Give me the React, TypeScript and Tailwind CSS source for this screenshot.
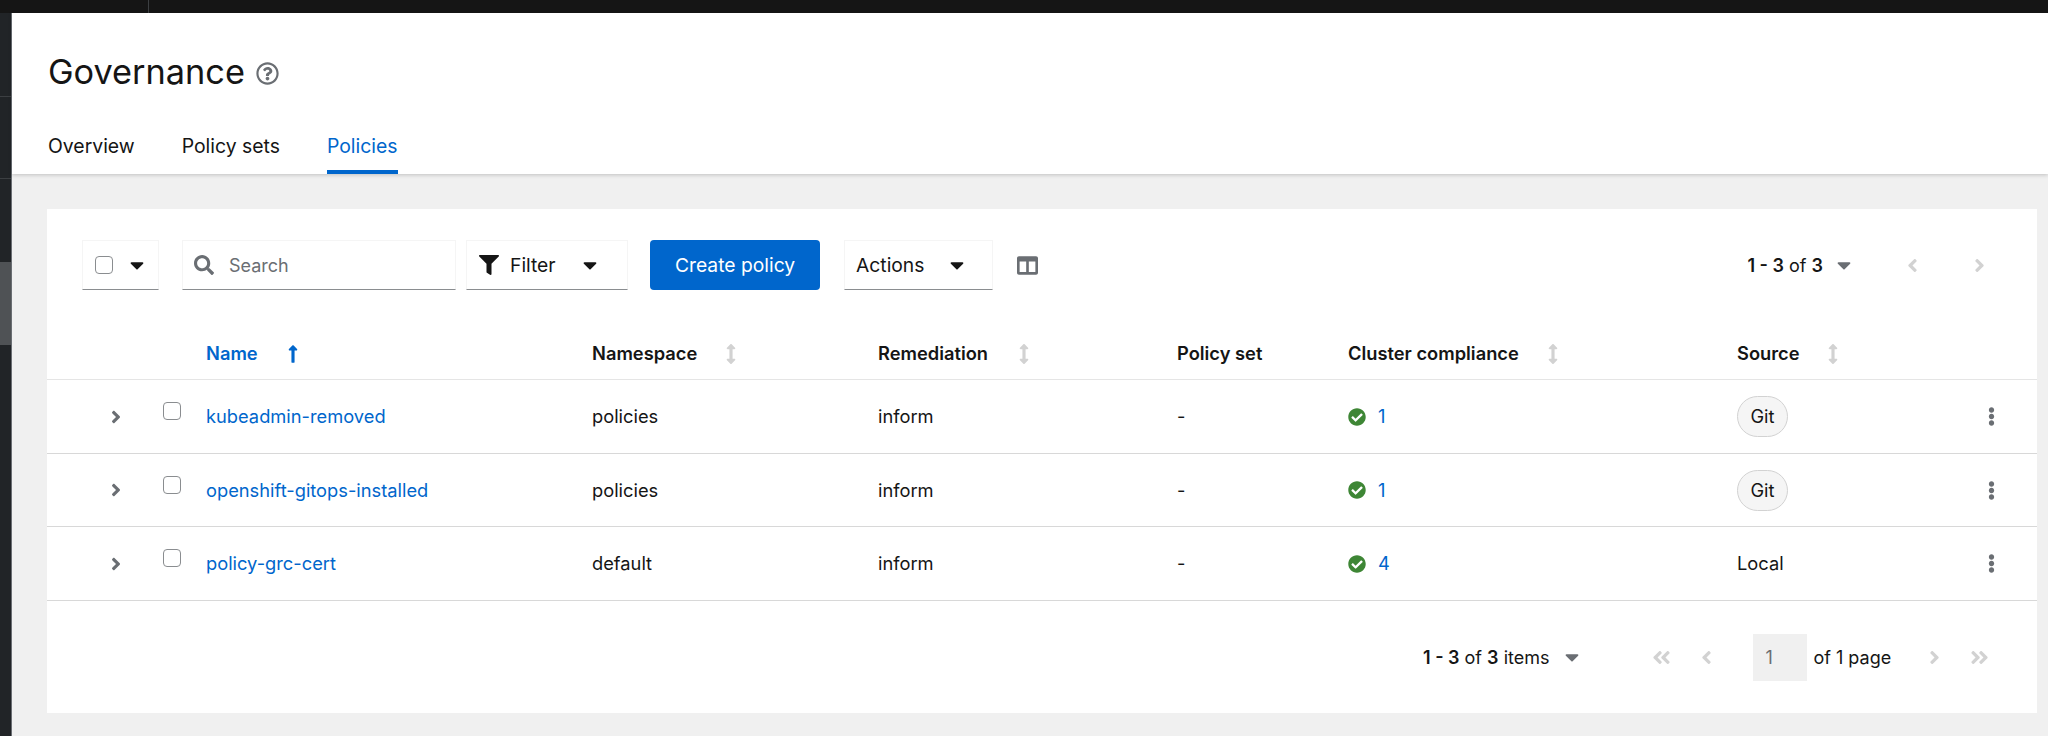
import React from "react";
import {
  FaAngleDoubleLeft,
  FaAngleDoubleRight,
  FaAngleLeft,
  FaAngleRight,
  FaArrowsAltV,
  FaCaretDown,
  FaCheckCircle,
  FaColumns,
  FaEllipsisV,
  FaFilter,
  FaLongArrowAltUp,
  FaRegQuestionCircle,
  FaSearch,
} from "react-icons/fa";

type Policy = {
  name: string;
  namespace: string;
  compliance: number;
  source: string;
};

const policies: Policy[] = [
  { name: "kubeadmin-removed", namespace: "policies", compliance: 1, source: "Git" },
  { name: "openshift-gitops-installed", namespace: "policies", compliance: 1, source: "Git" },
  { name: "policy-grc-cert", namespace: "default", compliance: 4, source: "Local" },
];

const gridCols = "grid grid-cols-[159px_386px_286px_299px_171px_389px_245px_20px] items-center";

function Checkbox() {
  return <span className="block w-[18px] h-[18px] rounded-[4px] border border-[#8a8d90] bg-white" />;
}

function SortHeader({ title }: { title: string }) {
  return (
    <div className="flex items-center text-[#151515] font-semibold">
      {title}
      <FaArrowsAltV className="ml-auto text-[#d2d2d2] text-[20px]" />
    </div>
  );
}

function Dropdown({ className, children }: { className: string; children: React.ReactNode }) {
  return (
    <div className={`flex items-center h-[50px] border border-[#f5f5f5] border-b-[#8a8d90] ${className}`}>
      {children}
    </div>
  );
}

function Toolbar() {
  return (
    <div className="flex items-center h-[50px] pl-[35px] pr-[47px] text-[18px]">
      <Dropdown className="w-[77px] pl-[12px]">
        <Checkbox />
        <FaCaretDown className="ml-[13px] text-[#151515] text-[22px]" />
      </Dropdown>
      <Dropdown className="w-[274px] ml-[23px] pl-[11px]">
        <FaSearch className="text-[#6a6e73] text-[20px]" />
        <span className="ml-[15px] text-[#6a6e73]">Search</span>
      </Dropdown>
      <Dropdown className="w-[162px] ml-[10px] pl-[12px]">
        <FaFilter className="text-[#151515] text-[20px]" />
        <span className="ml-[11px] text-[#151515] text-[19.3px]">Filter</span>
        <FaCaretDown className="ml-[23px] text-[#151515] text-[22px]" />
      </Dropdown>
      <button className="w-[170px] h-[50px] ml-[22px] bg-[#0066cc] text-white text-[19.3px] rounded-[4px]">
        Create policy
      </button>
      <Dropdown className="w-[149px] ml-[24px] pl-[11px]">
        <span className="text-[#151515] text-[19.3px]">Actions</span>
        <FaCaretDown className="ml-[22px] text-[#151515] text-[22px]" />
      </Dropdown>
      <FaColumns className="ml-[24px] text-[#6a6e73] text-[21px]" />
      <div className="ml-auto flex items-center text-[#151515]">
        <span>
          <b className="font-semibold">1 - 3</b> of <b className="font-semibold">3</b>
        </span>
        <FaCaretDown className="ml-[10px] text-[#6a6e73] text-[22px]" />
        <FaAngleLeft className="ml-[47px] text-[#d2d2d2] text-[21px]" />
        <FaAngleRight className="ml-[46px] text-[#d2d2d2] text-[21px]" />
      </div>
    </div>
  );
}

function PolicyTable() {
  return (
    <div className="mt-[38px] text-[18.3px]">
      <div className={`${gridCols} h-[52px] border-b border-[#e5e5e5]`}>
        <div />
        <div className="flex items-center text-[#0066cc] font-semibold">
          Name
          <FaLongArrowAltUp className="ml-[25px] text-[20px]" />
        </div>
        <div className="w-[149px]">
          <SortHeader title="Namespace" />
        </div>
        <div className="w-[156px]">
          <SortHeader title="Remediation" />
        </div>
        <div className="text-[#151515] font-semibold">Policy set</div>
        <div className="w-[215px]">
          <SortHeader title="Cluster compliance" />
        </div>
        <div className="w-[106px]">
          <SortHeader title="Source" />
        </div>
      </div>
      {policies.map((policy) => (
        <div key={policy.name} className={`${gridCols} h-[73.5px] pt-[1px] border-b border-[#d8d8d8]`}>
          <div className="flex items-center pl-[59px]">
            <FaAngleRight className="text-[#6a6e73] text-[20px]" />
            <div className="ml-[37px] mb-[11px]">
              <Checkbox />
            </div>
          </div>
          <div className="text-[#0066cc]">{policy.name}</div>
          <div className="text-[#151515]">{policy.namespace}</div>
          <div className="text-[#151515]">inform</div>
          <div className="text-[#151515]">-</div>
          <div className="flex items-center">
            <FaCheckCircle className="text-[#3e8635] text-[18px]" />
            <span className="ml-[12px] text-[#0066cc]">{policy.compliance}</span>
          </div>
          <div>
            {policy.source === "Git" ? (
              <span className="inline-flex items-center justify-center w-[51px] h-[41px] rounded-full border border-[#d2d2d2] bg-[#f5f5f5] text-[#151515]">
                Git
              </span>
            ) : (
              <span className="text-[#151515]">{policy.source}</span>
            )}
          </div>
          <FaEllipsisV className="text-[#6a6e73] text-[19px]" />
        </div>
      ))}
    </div>
  );
}

function Pagination() {
  return (
    <div className="flex items-center mt-[33px] pl-[1376px] text-[18px] text-[#151515]">
      <span>
        <b className="font-semibold">1 - 3</b> of <b className="font-semibold">3</b> items
      </span>
      <FaCaretDown className="ml-[12px] text-[#6a6e73] text-[22px]" />
      <FaAngleDoubleLeft className="ml-[68px] text-[#d2d2d2] text-[21px]" />
      <FaAngleLeft className="ml-[24px] text-[#d2d2d2] text-[21px]" />
      <div className="flex items-center w-[54px] h-[47px] ml-[36px] pl-[12px] bg-[#f0f0f0] text-[#6a6e73]">1</div>
      <span className="ml-[6px]">of 1 page</span>
      <FaAngleRight className="ml-[33px] text-[#d2d2d2] text-[21px]" />
      <FaAngleDoubleRight className="ml-[24px] text-[#d2d2d2] text-[21px]" />
    </div>
  );
}

export default function App() {
  return (
    <div className="w-[2048px] h-[736px] overflow-hidden flex flex-col bg-[#151515] font-['Inter',sans-serif]">
      <div className="h-[13px] flex">
        <div className="w-[149px] border-r border-[#3c3f42]" />
      </div>
      <div className="flex flex-1">
        <div className="w-[12px] flex flex-col bg-[#212427] border-r border-[#6a6e73]">
          <div className="h-[84px] border-b border-[#3c3f42]" />
          <div className="h-[82px] border-b border-[#3c3f42]" />
          <div className="h-[83px]" />
          <div className="h-[83px] bg-[#4f5255]" />
        </div>
        <div className="flex-1 bg-[#f0f0f0] flex flex-col">
          <div className="bg-white h-[161px] pl-[36px] shadow-[0_1px_4px_rgba(3,3,3,0.2)] flex flex-col">
            <div className="flex items-center mt-[38px] h-[42px]">
              <h1 className="text-[34.3px] font-normal text-[#151515]">Governance</h1>
              <FaRegQuestionCircle className="ml-[11px] mt-[2px] text-[#6a6e73] text-[23px]" />
            </div>
            <div className="flex mt-auto text-[19.4px] gap-[47px]">
              <div className="pb-[13px] text-[#151515]">Overview</div>
              <div className="pb-[13px] text-[#151515]">Policy sets</div>
              <div className="pb-[9px] border-b-4 border-[#0066cc] text-[#0066cc]">Policies</div>
            </div>
          </div>
          <div className="ml-[35px] mr-[11px] mt-[35px] h-[504px] bg-white pt-[31px]">
            <Toolbar />
            <PolicyTable />
            <Pagination />
          </div>
        </div>
      </div>
    </div>
  );
}
